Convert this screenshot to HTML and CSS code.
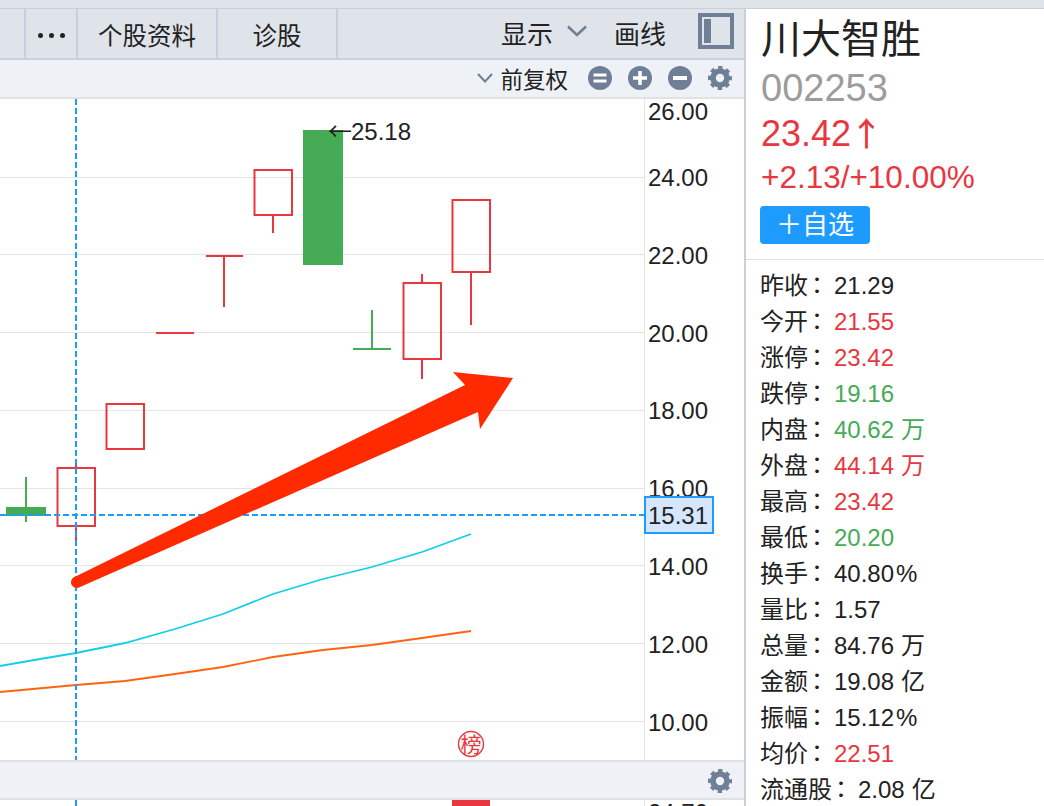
FILE: index.html
```html
<!DOCTYPE html>
<html lang="en">
<head>
    <meta charset="UTF-8">
    <title>川大智胜 002253</title>
    <link rel="stylesheet" href="styles.css">
</head>
<body>
    <svg class="defs" width="0" height="0">
        <symbol id="gear" viewBox="0 0 24 24">
            <circle cx="12" cy="12" r="7" fill="none" stroke="#6f7f96" stroke-width="5.6"/>
            <circle cx="12" cy="12" r="10" fill="none" stroke="#6f7f96" stroke-width="4" stroke-dasharray="4.2 3.65" stroke-dashoffset="2.1"/>
        </symbol>
    </svg>
    <div class="strip"></div>
    <div class="page">
        <div class="main">
            <div class="toolbar">
                <div class="tab tab-blank"></div>
                <div class="tab tab-more"><i></i><i></i><i></i></div>
                <div class="tab tab-wide">个股资料</div>
                <div class="tab tab-wide">诊股</div>
                <div class="tools">
                    <span>显示</span>
                    <svg class="chevron" width="20" height="12" viewBox="0 0 20 12"><path d="M1 1.5 L10 10 L19 1.5" fill="none" stroke="#6f7f96" stroke-width="2.5"/></svg>
                    <span class="draw">画线</span>
                    <div class="layout-icon"><div></div></div>
                </div>
            </div>
            <div class="subbar">
                <svg width="16" height="10" viewBox="0 0 16 10"><path d="M1 1 L8 8.5 L15 1" fill="none" stroke="#6f7f96" stroke-width="2"/></svg>
                <span class="adjust">前复权</span>
                <div class="actions">
                    <svg width="24" height="24" viewBox="0 0 24 24"><circle cx="12" cy="12" r="12" fill="#6f7f96"/><path d="M5.5 9 H18.5 M5.5 15 H18.5" stroke="#fff" stroke-width="3"/></svg>
                    <svg width="24" height="24" viewBox="0 0 24 24"><circle cx="12" cy="12" r="12" fill="#6f7f96"/><path d="M5 12 H19 M12 5 V19" stroke="#fff" stroke-width="3.6"/></svg>
                    <svg width="24" height="24" viewBox="0 0 24 24"><circle cx="12" cy="12" r="12" fill="#6f7f96"/><path d="M5 12 H19" stroke="#fff" stroke-width="4"/></svg>
                    <svg width="24" height="24"><use href="#gear"/></svg>
                </div>
            </div>
            <svg class="chart" width="744" height="661" viewBox="0 99 744 661">
                <g class="grid">
                    <path d="M0 177.5 H644 M0 254.5 H644 M0 332.5 H644 M0 410.5 H644 M0 488.5 H644 M0 565.5 H644 M0 643.5 H644 M0 721.5 H644"/>
                    <path d="M644.5 99 V761"/>
                </g>
                <g class="candle-up">
                    <path d="M76 460 V468 M76 526 V544 M156 333 H194 M206 256 H243 M224 256 V307 M273 215 V233 M422 274 V283 M422 359 V379 M471 272 V325"/>
                    <rect x="57.5" y="468" width="37.5" height="58"/>
                    <rect x="106.5" y="404" width="37.5" height="45"/>
                    <rect x="254.5" y="170" width="37.5" height="45"/>
                    <rect x="403.5" y="283" width="37.5" height="76"/>
                    <rect x="452.5" y="200" width="37.5" height="72"/>
                </g>
                <g class="candle-down">
                    <path d="M26 477 V522 M353 349 H391 M372 310 V349"/>
                    <rect x="6" y="507" width="40" height="9"/>
                    <rect x="303" y="130" width="40" height="135"/>
                </g>
                <polyline class="ma-cyan" points="0,666 40,659 76,653 125,643 175,629 223,614 273,594 323,579 372,567 422,552 471,534"/>
                <polyline class="ma-orange" points="0,692 76,685 125,681 175,674 223,667 273,657 323,650 372,645 422,638 471,631"/>
                <g class="cross">
                    <path d="M76 99 V761"/>
                    <path d="M0 515 H645"/>
                </g>
                <path class="arrow" d="M73.5 577.5 L465 385 L453 372 L513 378 L480 429 L478 412 L80 587 A5.2 5.2 0 0 1 73.5 577.5 Z"/>
                <text class="price" x="328" y="140"><tspan class="price-arrow">←</tspan><tspan dx="-1">25.18</tspan></text>
                <g class="axis">
                    <text x="648" y="120">26.00</text>
                    <text x="648" y="186">24.00</text>
                    <text x="648" y="264">22.00</text>
                    <text x="648" y="342">20.00</text>
                    <text x="648" y="419">18.00</text>
                    <text x="648" y="497">16.00</text>
                    <text x="648" y="575">14.00</text>
                    <text x="648" y="653">12.00</text>
                    <text x="648" y="731">10.00</text>
                </g>
                <rect class="cross-box" x="645" y="497" width="68" height="36"/>
                <text class="axis-now" x="648" y="524">15.31</text>
                <circle class="bang" cx="471" cy="744" r="12.5"/>
                <text class="bang-text" x="471" y="751.5">榜</text>
            </svg>
            <div class="bottombar">
                <svg width="24" height="24"><use href="#gear"/></svg>
            </div>
            <svg class="chart-low" width="744" height="6" viewBox="0 800 744 6">
                <path class="grid-axis" d="M644.5 800 V806"/>
                <path class="cross" d="M76 800 V806"/>
                <rect class="vol" x="452" y="800" width="38" height="6"/>
                <text class="axis-low" x="648" y="821">24.70</text>
            </svg>
        </div>
        <div class="side">
            <div class="head">
                <div class="name">川大智胜</div>
                <div class="code">002253</div>
                <div class="now up">23.42<span class="now-arrow">↑</span></div>
                <div class="change up">+2.13/+10.00%</div>
                <div class="add">＋自选</div>
            </div>
            <div class="rows">
                <div class="row">昨收<i>：</i><span>21.29</span></div>
                <div class="row">今开<i>：</i><span class="up">21.55</span></div>
                <div class="row">涨停<i>：</i><span class="up">23.42</span></div>
                <div class="row">跌停<i>：</i><span class="down">19.16</span></div>
                <div class="row">内盘<i>：</i><span class="down">40.62<em>万</em></span></div>
                <div class="row">外盘<i>：</i><span class="up">44.14<em>万</em></span></div>
                <div class="row">最高<i>：</i><span class="up">23.42</span></div>
                <div class="row">最低<i>：</i><span class="down">20.20</span></div>
                <div class="row">换手<i>：</i><span>40.80<b>%</b></span></div>
                <div class="row">量比<i>：</i><span>1.57</span></div>
                <div class="row">总量<i>：</i><span>84.76<em>万</em></span></div>
                <div class="row">金额<i>：</i><span>19.08<em>亿</em></span></div>
                <div class="row">振幅<i>：</i><span>15.12<b>%</b></span></div>
                <div class="row">均价<i>：</i><span class="up">22.51</span></div>
                <div class="row">流通股<i>：</i><span>2.08<em>亿</em></span></div>
            </div>
        </div>
    </div>
</body>
</html>
```

FILE: styles.css
```css
* {
    box-sizing: border-box;
}

body {
    margin: 0;
    height: 806px;
    overflow: hidden;
    background: #fff;
    color: #222;
    font-family: "Liberation Sans", "Noto Sans CJK SC", sans-serif;
    font-size: 24px;
}

.defs {
    display: block;
    height: 0;
}

.strip {
    height: 9px;
    background: #dfe4ea;
    border-bottom: 1px solid #c8d1db;
}

.page {
    display: flex;
    height: 797px;
}

.main {
    width: 746px;
    flex: none;
    border-right: 2px solid #c8d1db;
}

.toolbar {
    display: flex;
    height: 51px;
    background: #dfe4ea;
    border-bottom: 2px solid #c8d1db;
}

.tab {
    display: flex;
    align-items: center;
    justify-content: center;
    border-right: 2px solid #c8d1db;
    padding-top: 2px;
    font-size: 24.5px;
}

.tab-blank {
    width: 26px;
}

.tab-more {
    width: 52px;
    gap: 6px;
    padding-top: 4px;
}

.tab-more i {
    width: 5px;
    height: 5px;
    border-radius: 50%;
    background: #222;
}

.tab-wide {
    width: 120px;
}

.tab-wide:nth-child(3) {
    width: 140px;
}

.tools {
    flex: 1;
    display: flex;
    align-items: center;
    justify-content: flex-end;
    padding-right: 10px;
    font-size: 26px;
}

.tools span {
    margin-bottom: 2px;
}

.chevron {
    margin-left: 14px;
    margin-bottom: 6px;
}

.tools .draw {
    margin-left: 27px;
}

.layout-icon {
    width: 36px;
    height: 36px;
    margin-left: 32px;
    margin-bottom: 6px;
    border: 4px solid #6f7f96;
    padding: 2px;
}

.layout-icon div {
    width: 7px;
    height: 24px;
    background: #6f7f96;
}

.subbar {
    display: flex;
    align-items: center;
    justify-content: flex-end;
    height: 39px;
    padding: 0 12px 2px 0;
    background: #eef1f6;
    border-bottom: 2px solid #e2e2e4;
}

.adjust {
    margin: 0 20px 0 7px;
    font-size: 22.5px;
}

.actions {
    display: flex;
    gap: 16px;
}

.chart {
    display: block;
}

.grid path {
    fill: none;
    stroke: #e4e4e4;
    stroke-width: 1;
}

.candle-up path,
.candle-up rect {
    fill: none;
    stroke: #e8373e;
    stroke-width: 2;
}

.candle-down path {
    fill: none;
    stroke: #46ab55;
    stroke-width: 2;
}

.candle-down rect {
    fill: #46ab55;
}

.ma-cyan,
.ma-orange {
    fill: none;
    stroke-width: 1.8;
}

.ma-cyan {
    stroke: #12cfe8;
}

.ma-orange {
    stroke: #ff6312;
}

.cross path,
path.cross {
    fill: none;
    stroke: #1d9bff;
    stroke-width: 2;
    stroke-dasharray: 6 3;
}

.arrow {
    fill: #ff2a00;
}

.price,
.axis text,
.axis-now,
.axis-low {
    font-size: 24px;
    fill: #222;
}

.price-arrow {
    font-family: "Noto Sans CJK SC", sans-serif;
}

.cross-box {
    fill: #d6e6ff;
    stroke: #1d9bff;
    stroke-width: 2;
}

.bang {
    fill: #fff;
    stroke: #e8373e;
    stroke-width: 1.4;
}

.bang-text {
    font-size: 21px;
    fill: #e8373e;
    text-anchor: middle;
}

.bottombar {
    display: flex;
    align-items: center;
    justify-content: flex-end;
    height: 40px;
    padding: 1px 12px 0 0;
    background: #eef1f6;
    border-top: 2px solid #e2e2e4;
    border-bottom: 2px solid #e2e2e4;
}

.chart-low {
    display: block;
}

.grid-axis {
    stroke: #e4e4e4;
    fill: none;
}

.vol {
    fill: #e8373e;
}

.side {
    flex: 1;
}

.head {
    height: 251px;
    padding-left: 15px;
    border-bottom: 1px solid #e0e0e0;
}

.name {
    font-size: 40px;
    line-height: 58px;
    padding-top: 1px;
    height: 58px;
}

.code {
    font-size: 38px;
    line-height: 42px;
    color: #9c9c9c;
}

.now {
    height: 48px;
    margin-top: -1px;
    font-size: 36px;
    line-height: 48px;
}

.now-arrow {
    margin-left: -1px;
    font-family: "Noto Sans CJK SC", sans-serif;
    font-size: 33px;
    font-weight: 500;
}

.change {
    height: 40px;
    margin-top: 1px;
    font-size: 31.5px;
    line-height: 40px;
}

.up {
    color: #e8373e;
}

.down {
    color: #46ab55;
}

.add {
    width: 110px;
    height: 38px;
    margin: 9px 0 0 -1px;
    border-radius: 4px;
    background: #1d9bff;
    color: #fff;
    font-size: 26px;
    line-height: 38px;
    text-align: center;
}

.rows {
    padding: 6px 0 0 14px;
}

.row {
    height: 36px;
    line-height: 36px;
    white-space: nowrap;
}

.row i {
    margin: 0 5px 0 -3px;
    font-family: "Noto Sans CJK TC", sans-serif;
    font-style: normal;
}

.row em {
    margin-left: 7px;
    font-style: normal;
}

.row b {
    margin-left: 2px;
    font-weight: normal;
}
```
